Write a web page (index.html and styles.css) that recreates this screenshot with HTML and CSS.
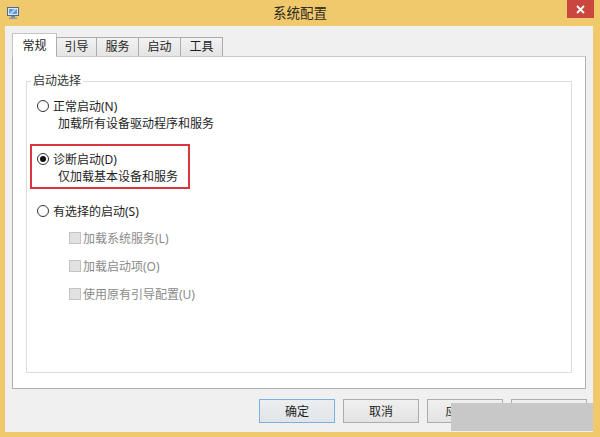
FILE: index.html
```html
<!DOCTYPE html>
<html lang="zh-CN">
<head>
  <meta charset="UTF-8">
  <title>系统配置</title>
  <link rel="stylesheet" href="styles.css">
</head>
<body>
  <div class="window">
    <div class="titlebar">
      <svg class="app-icon" width="12" height="12" viewBox="0 0 12 12">
        <!-- little monitor -->
        <rect x="0.5" y="0.5" width="11" height="8" fill="#dfe9f5" stroke="#51698d"/>
        <rect x="2" y="2" width="8" height="5" fill="#5b9ad8"/>
        <path d="M2 7 L7 2 H10 L5 7 Z" fill="#a9d0f3"/>
        <rect x="4" y="9" width="4" height="1.5" fill="#6f7f96"/>
        <rect x="2" y="10.5" width="8" height="1.5" fill="#8c99ab"/>
      </svg>
      <div class="title">系统配置</div>
      <div class="close">
        <svg width="9" height="9" viewBox="0 0 9 9">
          <path d="M1 1 L8 8 M8 1 L1 8" stroke="#fff" stroke-width="1.8"/>
        </svg>
      </div>
    </div>

    <div class="client">
      <div class="tabs">
        <div class="tab active">常规</div>
        <div class="tab w40">引导</div>
        <div class="tab">服务</div>
        <div class="tab w42">启动</div>
        <div class="tab">工具</div>
      </div>

      <div class="panel">
        <fieldset class="group">
          <legend>启动选择</legend>

          <div class="opt"><span class="radio"></span>正常启动(N)</div>
          <div class="desc">加载所有设备驱动程序和服务</div>

          <div class="highlight">
            <div class="opt"><span class="radio on"></span>诊断启动(D)</div>
            <div class="desc">仅加载基本设备和服务</div>
          </div>

          <div class="opt selective"><span class="radio"></span>有选择的启动(S)</div>
          <div class="checks">
            <div class="check"><span class="box"></span>加载系统服务(L)</div>
            <div class="check"><span class="box"></span>加载启动项(O)</div>
            <div class="check"><span class="box"></span>使用原有引导配置(U)</div>
          </div>
        </fieldset>
      </div>

      <div class="buttons">
        <button class="default">确定</button>
        <button>取消</button>
        <button>应用(A)</button>
        <button>帮助</button>
      </div>
    </div>

    <div class="cover"></div>
  </div>
</body>
</html>
```

FILE: styles.css
```css
body {
  margin: 0;
  font-family: "Noto Sans", "Noto Sans CJK SC", sans-serif;
  font-size: 12px;
  color: #1e1e1e;
}
.window {
  position: relative;
  width: 600px;
  height: 437px;
  background: #efc96c;
  display: flex;
  flex-direction: column;
  overflow: hidden;
}

/* title bar */
.titlebar {
  height: 26px;
  display: grid;
  grid-template-columns: 1fr auto 1fr;
  align-items: start;
  flex-shrink: 0;
}
.app-icon {
  margin: 7px 0 0 7px;
}
.title {
  font-size: 13.5px;
  line-height: 26px;
  color: #2e2a22;
}
.close {
  justify-self: end;
  width: 27px;
  height: 18px;
  margin-right: 6px;
  background: #c9473f;
  display: flex;
  align-items: center;
  justify-content: center;
}

/* client area */
.client {
  flex: 1;
  margin: 0 7px 5px 5px;
  padding: 7px 7px 9px 7px;
  background: #f0f0f0;
  display: flex;
  flex-direction: column;
  min-height: 0;
}
.tabs {
  display: flex;
  align-items: flex-end;
  height: 24px;
  margin-bottom: -1px;
  position: relative;
  z-index: 1;
}
.tab {
  width: 43px;
  height: 19px;
  line-height: 18px;
  box-sizing: border-box;
  text-align: center;
  border: 1px solid #acacac;
  border-bottom: none;
  margin-left: -1px;
  background: linear-gradient(#f2f2f2, #e4e4e4);
  margin-bottom: 1px;
}
.tab.w40 { width: 41px; }
.tab.w42 { width: 43px; }
.tab.active {
  width: 45px;
  height: 24px;
  line-height: 23px;
  margin-left: 0;
  margin-bottom: 0;
  background: #fff;
  border-color: #c4c4c4;
}

.panel {
  flex: 1;
  background: #fff;
  border: 1px solid #b0b0b0;
  border-top-color: #c8c8c8;
  padding: 16px 13px 15px 13px;
  display: flex;
  flex-direction: column;
  min-height: 0;
}
.group {
  flex: 1;
  margin: 0;
  padding: 8px 0 0 0;
  border: 1px solid #dcdcdc;
  min-width: 0;
}
.group legend {
  margin-left: 4px;
  padding: 0 2px;
  line-height: 16px;
  color: #333;
}

/* radio options */
.opt {
  display: flex;
  align-items: center;
  height: 18px;
  padding-left: 10px;
}
.radio {
  width: 12px;
  height: 12px;
  box-sizing: border-box;
  border: 1px solid #333;
  border-radius: 50%;
  background: #fff;
  margin-right: 4px;
  display: flex;
  align-items: center;
  justify-content: center;
}
.radio.on::after {
  content: "";
  width: 6px;
  height: 6px;
  border-radius: 50%;
  background: #111;
}
.desc {
  height: 18px;
  line-height: 18px;
  padding-left: 31px;
}
.highlight {
  width: 160px;
  box-sizing: border-box;
  margin: 11px 0 0 3px;
  padding: 4px 0 1px 5px;
  border: 2px solid #d8363c;
}
.highlight .opt { padding-left: 0; }
.highlight .desc { padding-left: 21px; }
.selective { margin-top: 13px; }

/* disabled checkboxes */
.checks {
  margin-top: 9px;
  padding-left: 42px;
  display: flex;
  flex-direction: column;
  gap: 10px;
}
.check {
  display: flex;
  align-items: center;
  height: 18px;
  color: #8a8a8a;
}
.box {
  width: 12px;
  height: 12px;
  box-sizing: border-box;
  border: 1px solid #c4c4c4;
  background: #e2e2e2;
  margin-right: 2px;
}

/* dialog buttons */
.buttons {
  display: flex;
  justify-content: flex-end;
  gap: 8px;
  margin-top: 10px;
  margin-right: -1px;
}
button {
  width: 76px;
  height: 24px;
  font-family: inherit;
  font-size: 12px;
  color: #1e1e1e;
  border: 1px solid #adadad;
  background: linear-gradient(#f0f0f0, #e3e3e3);
  padding: 0;
}
button.default {
  border-color: #79b0df;
  background: linear-gradient(#eceef0, #e1e5e9);
}

.cover {
  position: absolute;
  left: 451px;
  top: 403px;
  width: 142px;
  height: 28px;
  background: #c8c8c8;
}
```
